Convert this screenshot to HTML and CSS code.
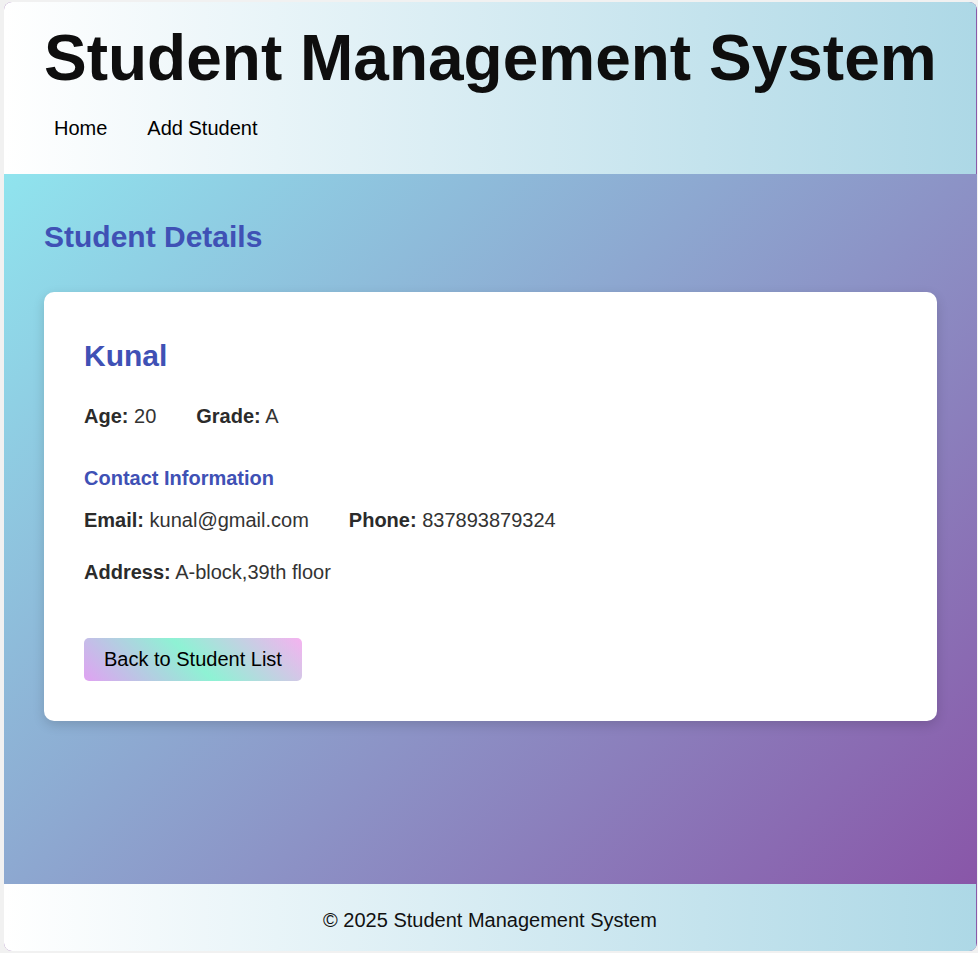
FILE: index.html
```html
<!DOCTYPE html>
<html lang="en">
<head>
<meta charset="utf-8">
<title>Student Details</title>
<link rel="stylesheet" href="styles.css">
</head>
<body>
<div class="app">
  <header class="site-header">
    <h1 class="site-title">Student Management System</h1>
    <nav class="site-nav">
      <a href="#" class="nav-link">Home</a>
      <a href="#" class="nav-link">Add Student</a>
    </nav>
  </header>
  <main class="site-main">
    <h2 class="page-title">Student Details</h2>
    <section class="card">
      <h2 class="student-name">Kunal</h2>
      <div class="info-row row-basic">
        <span><strong>Age:</strong> 20</span>
        <span><strong>Grade:</strong> A</span>
      </div>
      <h3 class="section-title">Contact Information</h3>
      <div class="info-row row-contact">
        <span><strong>Email:</strong> kunal@gmail.com</span>
        <span><strong>Phone:</strong> 837893879324</span>
      </div>
      <div class="info-row row-address">
        <span><strong>Address:</strong> A-block,39th floor</span>
      </div>
      <a href="#" class="back-btn">Back to Student List</a>
    </section>
  </main>
  <footer class="site-footer">
    <p class="footer-text">&copy; 2025 Student Management System</p>
  </footer>
</div>
</body>
</html>
```
FILE: styles.css
```css
* { box-sizing: border-box; }

html, body {
  margin: 0;
  padding: 0;
  height: 100%;
}

body {
  background: #f1f1f1;
  font-family: "Liberation Sans", Arial, sans-serif;
  font-size: 20px;
  color: #333;
}

.app {
  margin: 2px 1px 2px 4px;
  height: calc(100vh - 4px);
  display: flex;
  flex-direction: column;
  border-radius: 8px;
  overflow: hidden;
  background: #8a5aa8;
}

.site-header {
  background: linear-gradient(to right, #ffffff, #add8e6);
  padding: 19px 40px 24px 40px;
  margin-right: 1px;
}

.site-title {
  margin: 0 0 12px 0;
  font-size: 64px;
  font-weight: bold;
  color: #0e0e0e;
  white-space: nowrap;
}

.site-nav {
  display: flex;
  gap: 20px;
}

.nav-link {
  padding: 10px;
  color: #000;
  text-decoration: none;
  font-size: 20px;
}

.site-main {
  flex: 1;
  background: linear-gradient(135deg, #90e4ee, #8956a8);
  padding: 46px 40px 40px 40px;
}

.page-title {
  margin: 0 0 38px 0;
  font-size: 30px;
  font-weight: bold;
  color: #3f51b5;
}

.card {
  background: #fff;
  border-radius: 10px;
  padding: 40px;
  box-shadow: 0 4px 12px rgba(0, 0, 0, 0.15);
}

.student-name {
  margin: 7px 0 32px 0;
  font-size: 30px;
  font-weight: bold;
  color: #3f51b5;
}

.info-row {
  display: flex;
  gap: 40px;
  color: #333;
}

.info-row strong {
  color: #2b2b2b;
}

.row-basic {
  margin-bottom: 39px;
}

.section-title {
  margin: 0 0 19px 0;
  font-size: 20px;
  font-weight: bold;
  color: #3f51b5;
}

.row-contact {
  margin-bottom: 29px;
}

.row-address {
  margin-bottom: 54px;
}

.back-btn {
  display: inline-block;
  padding: 10px 20px;
  border-radius: 5px;
  background: linear-gradient(45deg, #e0a2f2, #8ef2d4, #f5b2f0);
  color: #000;
  text-decoration: none;
  font-size: 20px;
  vertical-align: top;
}

.site-footer {
  background: linear-gradient(to right, #ffffff, #add8e6);
  padding: 25px 0 19px 0;
  margin-right: 1px;
  text-align: center;
}

.footer-text {
  margin: 0;
  color: #111;
  font-size: 20px;
}
```
